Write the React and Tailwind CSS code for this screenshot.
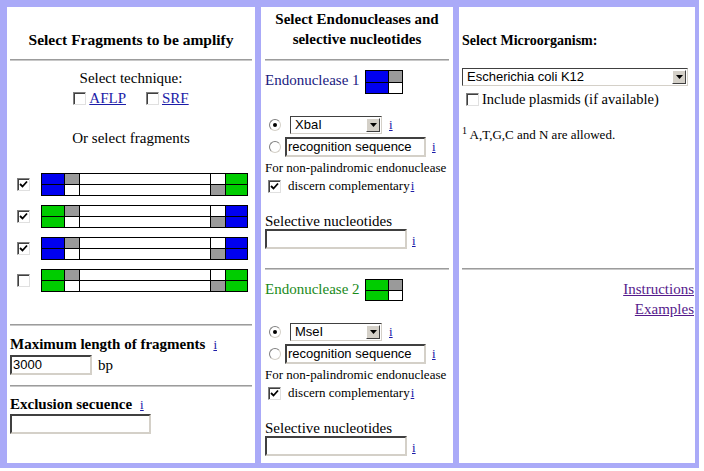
import React from "react";

const fill = {
  blue: "bg-[#0000f0]",
  green: "bg-[#00cc00]",
  gray: "bg-[#9a9a9a]",
  white: "bg-white",
};

const fragments = [
  { left: "blue", right: "green", checked: true },
  { left: "green", right: "blue", checked: true },
  { left: "blue", right: "blue", checked: true },
  { left: "green", right: "green", checked: false },
];

function Hr() {
  return <div className="h-[2px] border-t border-[#9c9c9c] bg-[#c8c8c8]" />;
}

function Check({ checked }) {
  return (
    <div className="flex h-[13px] w-[13px] shrink-0 items-center justify-center border border-t-[#808080] border-l-[#808080] border-r-[#e0e0e0] border-b-[#e0e0e0] bg-white shadow-[inset_1px_1px_0_#404040]">
      {checked && (
        <svg width="9" height="9" viewBox="0 0 9 9">
          <path d="M1 4 L3.5 6.5 L8 1.5" stroke="#000" strokeWidth="1.8" fill="none" />
        </svg>
      )}
    </div>
  );
}

function Radio({ checked }) {
  return (
    <div className="flex h-[12px] w-[12px] shrink-0 items-center justify-center rounded-full border border-t-[#808080] border-l-[#808080] border-r-[#d4d0c8] border-b-[#d4d0c8] bg-white">
      {checked && <div className="h-[4px] w-[4px] rounded-full bg-black" />}
    </div>
  );
}

function TextBox({ value = "", className = "" }) {
  return (
    <div
      className={
        "h-[20px] shrink-0 border-2 border-t-[#404040] border-l-[#404040] border-r-[#d4d0c8] border-b-[#d4d0c8] bg-white px-[1px] font-['Liberation_Sans',sans-serif] text-[13px] leading-[16px] " +
        className
      }
    >
      {value}
    </div>
  );
}

function Select({ value, className = "" }) {
  return (
    <div
      className={
        "flex h-[18px] shrink-0 items-stretch border border-t-[#404040] border-l-[#404040] border-r-[#d4d0c8] border-b-[#d4d0c8] bg-white font-['Liberation_Sans',sans-serif] text-[13px] leading-[16px] " +
        className
      }
    >
      <div className="flex-1 pl-[4px]">{value}</div>
      <div className="m-[1px] flex w-[14px] items-center justify-center border border-t-white border-l-white border-r-[#404040] border-b-[#404040] bg-[#d4d0c8]">
        <svg width="7" height="4" viewBox="0 0 7 4">
          <path d="M0 0 H7 L3.5 4 Z" fill="#000" />
        </svg>
      </div>
    </div>
  );
}

function Info({ className = "" }) {
  return <span className={"text-[13px] leading-[16px] text-[#1c1ca8] underline " + className}>i</span>;
}

function Bar({ left, right }) {
  const cells = [left, "gray", "white", "white", right, left, "white", "white", "gray", right];
  return (
    <div className="grid h-[23px] w-[207px] grid-cols-[22px_14px_1fr_14px_21px] grid-rows-2 gap-px border border-black bg-black">
      {cells.map((c, i) => (
        <div key={i} className={fill[c]} />
      ))}
    </div>
  );
}

function Swatch({ color, tall }) {
  return (
    <div
      className={
        "grid w-[38px] grid-cols-[22px_13px] grid-rows-2 gap-px border border-black bg-black " +
        (tall ? "h-[24px]" : "h-[22px]")
      }
    >
      <div className={fill[color]} />
      <div className={fill.gray} />
      <div className={fill[color]} />
      <div className={fill.white} />
    </div>
  );
}

function Endonuclease({ label, color, textColor, enzyme, tall }) {
  return (
    <div className="flex flex-col">
      <div className="mt-[9px] flex items-start">
        <div className={"mt-[1px] w-[100px] whitespace-nowrap text-[15px] leading-[18px] " + textColor}>{label}</div>
        <Swatch color={color} tall={tall} />
      </div>
      <div className="mt-[21px] flex h-[20px] items-center">
        <div className="ml-[4px]">
          <Radio checked />
        </div>
        <Select value={enzyme} className="ml-[9px] w-[92px]" />
        <Info className="ml-[7px]" />
      </div>
      <div className="mt-[2px] flex h-[20px] items-center">
        <div className="ml-[4px]">
          <Radio />
        </div>
        <TextBox value="recognition sequence" className="ml-[4px] w-[141px]" />
        <Info className="ml-[6px]" />
      </div>
      <div className="mt-[3px] whitespace-nowrap text-[13px] leading-[16px]">For non-palindromic endonuclease</div>
      <div className="mt-[2px] flex h-[16px] items-center text-[13px]">
        <div className="ml-[3px]">
          <Check checked />
        </div>
        <span className="ml-[7px]">discern complementary</span>
        <Info className="ml-[1px]" />
      </div>
      <div className="mt-[19px] text-[15px] leading-[16px]">Selective nucleotides</div>
      <div className="flex items-end">
        <TextBox className="w-[142px]" />
        <Info className="ml-[5px]" />
      </div>
    </div>
  );
}

export default function App() {
  return (
    <div className="h-[468px] w-[699px] bg-[#aaaaf8] pt-[7px] pb-[5px] pl-[7px] font-['Liberation_Serif',serif] text-[15px] leading-[18px] text-black">
      <div className="grid h-full grid-cols-[248px_192px_236px] gap-x-[6px]">
        {/* fragments */}
        <div className="flex flex-col bg-white px-[3px]">
          <div className="flex h-[52px] items-end justify-center pb-[10px]">
            <h2 className="text-[15.5px] font-bold leading-[18px]">Select Fragments to be amplify</h2>
          </div>
          <Hr />
          <div className="mt-[8px] text-center">Select technique:</div>
          <div className="mt-[2px] flex items-center justify-center">
            <Check />
            <span className="ml-[3px] text-[#1c1ca8] underline">AFLP</span>
            <div className="ml-[20px]">
              <Check />
            </div>
            <span className="ml-[3px] text-[#1c1ca8] underline">SRF</span>
          </div>
          <div className="mt-[22px] text-center">Or select fragments</div>
          <div className="mt-[26px] flex flex-col gap-[9px]">
            {fragments.map((f, i) => (
              <div key={i} className="flex items-center pl-[7px]">
                <Check checked={f.checked} />
                <div className="ml-[11px]">
                  <Bar left={f.left} right={f.right} />
                </div>
              </div>
            ))}
          </div>
          <div className="mt-[32px]">
            <Hr />
          </div>
          <div className="mt-[9px] flex items-baseline">
            <span className="font-bold">Maximum length of fragments</span>
            <Info className="ml-[8px]" />
          </div>
          <div className="mt-[2px] flex items-center">
            <TextBox value="3000" className="w-[82px]" />
            <span className="ml-[6px]">bp</span>
          </div>
          <div className="mt-[10px]">
            <Hr />
          </div>
          <div className="mt-[8px] flex items-baseline">
            <span className="font-bold">Exclusion secuence</span>
            <Info className="ml-[8px]" />
          </div>
          <TextBox className="mt-[1px] w-[141px]" />
        </div>

        {/* endonucleases */}
        <div className="flex flex-col bg-white px-[4px]">
          <div className="flex h-[52px] flex-col items-center justify-end pb-[10px] text-center">
            <h2 className="text-[15px] font-bold leading-[20px]">
              Select Endonucleases and
              <br />
              selective nucleotides
            </h2>
          </div>
          <Hr />
          <Endonuclease label="Endonuclease 1" color="blue" textColor="text-[#1a1a80]" enzyme="XbaI" tall />
          <div className="mt-[19px]">
            <Hr />
          </div>
          <Endonuclease label="Endonuclease 2" color="green" textColor="text-[#1a8a1a]" enzyme="MseI" />
        </div>

        {/* microorganism */}
        <div className="flex flex-col bg-white pl-[3px] pr-[1px]">
          <div className="flex h-[52px] items-end pb-[9px]">
            <h2 className="text-[14px] font-bold leading-[18px]">Select Microorganism:</h2>
          </div>
          <Select value="Escherichia coli K12" className="mt-[9px] w-[226px]" />
          <div className="mt-[4px] flex items-center">
            <div className="ml-[4px]">
              <Check />
            </div>
            <span className="ml-[3px] text-[14.5px]">Include plasmids (if available)</span>
          </div>
          <div className="mt-[19px] text-[13px] leading-[16px]">
            <sup className="text-[10px]">1</sup> A,T,G,C and N are allowed.
          </div>
          <div className="mt-[125px]">
            <Hr />
          </div>
          <div className="mt-[10px] flex flex-col items-end">
            <span className="text-[#551a8b] underline">Instructions</span>
            <span className="mt-[2px] text-[#551a8b] underline">Examples</span>
          </div>
        </div>
      </div>
    </div>
  );
}
